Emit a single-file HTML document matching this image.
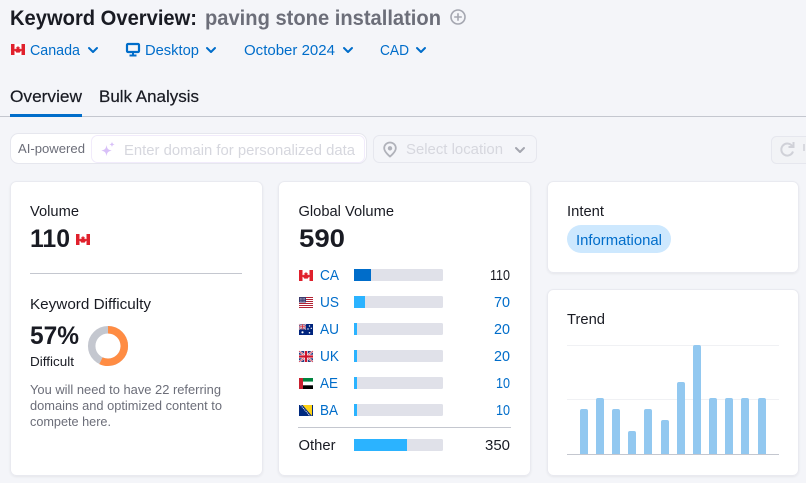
<!DOCTYPE html>
<html><head><meta charset="utf-8"><title>Keyword Overview</title>
<style>
html,body{margin:0;padding:0;background:#f4f5f9;width:806px;height:483px;overflow:hidden}
svg{display:block}
text{font-family:"Liberation Sans",sans-serif;font-size:14.8px;fill:#191b23}
.b{font-weight:700}
.blue{fill:#006dca}
.gr{fill:#6c6e79}
.ph{fill:#d6d7de}
.sm{font-size:12.7px}
.big{font-size:25.4px;font-weight:700}
.card{fill:#fff;stroke:#e9eaf0;stroke-width:1}
.chev{fill:none;stroke:#006dca;stroke-width:2;stroke-linecap:round;stroke-linejoin:round}
.track{fill:#e0e1e9}
.bar{fill:#92c8f0}
</style></head><body>
<svg width="806" height="483" viewBox="0 0 806 483" xmlns="http://www.w3.org/2000/svg">
<defs>
<symbol id="ca" viewBox="0 0 14 11"><rect width="14" height="11" fill="#fff"/><rect width="3.5" height="11" fill="#e0202c"/><rect x="10.5" width="3.5" height="11" fill="#e0202c"/><path d="M7 1.8l.8 1.5.9-.4-.3 2.2 1-.6.3.7 1.1-.2-.4 1.2.4.3-1.9 1.4.2.7-1.8-.2V9h-.6v-.6l-1.8.2.2-.7-1.9-1.4.4-.3-.4-1.2 1.1.2.3-.7 1 .6-.3-2.2.9.4z" fill="#e0202c"/></symbol>
<filter id="sh" x="-5%" y="-5%" width="110%" height="110%"><feDropShadow dx="0" dy="1" stdDeviation="1" flood-color="#191b23" flood-opacity=".06"/></filter>
</defs>

<rect width="806" height="483" fill="#f4f5f9"/>

<!-- Title -->
<text x="10" y="25" class="b" style="font-size:21px" textLength="187" lengthAdjust="spacingAndGlyphs">Keyword Overview:</text>
<text x="205" y="25" class="b" style="font-size:21px;fill:#6c6e79" textLength="236" lengthAdjust="spacingAndGlyphs">paving stone installation</text>
<circle cx="458" cy="17" r="7" fill="none" stroke="#a4a6b0" stroke-width="1.6"/>
<path d="M458 13.2v7.6M454.2 17h7.6" stroke="#a4a6b0" stroke-width="1.6"/>

<!-- Filters -->
<use href="#ca" x="11" y="44" width="14" height="11"/>
<text x="30" y="55" class="blue" textLength="50" lengthAdjust="spacingAndGlyphs">Canada</text>
<path d="M89 48l4 4 4-4" class="chev"/>
<rect x="127" y="44" width="12" height="8" rx="1" fill="none" stroke="#006dca" stroke-width="2.2"/>
<path d="M133 53v2.500M129.500 55.500h7" stroke="#006dca" stroke-width="2"/>
<text x="145" y="55" class="blue" textLength="54" lengthAdjust="spacingAndGlyphs">Desktop</text>
<path d="M207 48l4 4 4-4" class="chev"/>
<text x="244" y="55" class="blue" textLength="91" lengthAdjust="spacingAndGlyphs">October 2024</text>
<path d="M344 48l4 4 4-4" class="chev"/>
<text x="380" y="55" class="blue" textLength="29" lengthAdjust="spacingAndGlyphs">CAD</text>
<path d="M417 48l4 4 4-4" class="chev"/>

<!-- Tabs -->
<text x="10" y="102" style="font-size:16.9px;stroke:#191b23;stroke-width:.2" textLength="72" lengthAdjust="spacingAndGlyphs">Overview</text>
<text x="99" y="102" style="font-size:16.9px;stroke:#191b23;stroke-width:.2" textLength="100" lengthAdjust="spacingAndGlyphs">Bulk Analysis</text>
<rect x="0" y="116" width="806" height="1" fill="#c4c7cf"/>
<rect x="10" y="114" width="72" height="3" fill="#006dca"/>

<!-- AI row -->
<rect x="10.5" y="133.5" width="356" height="30" rx="8" fill="#fff" stroke="#e6e7ee"/>
<text x="18" y="153" class="sm gr" textLength="67" lengthAdjust="spacingAndGlyphs">AI-powered</text>
<rect x="91.5" y="135.5" width="273" height="27" rx="6" fill="#fff" stroke="#f1ebfb"/>
<path d="M106.500 145c.6 3.800 1.500 4.800 5.200 5.600-3.700.8-4.600 1.800-5.200 5.600-.6-3.800-1.500-4.800-5.200-5.600 3.700-.8 4.600-1.800 5.200-5.600z" fill="#d8c0f8"/>
<path d="M112 141.500c.3 2 .8 2.500 2.800 2.900-2 .4-2.500.9-2.800 2.900-.3-2-.8-2.500-2.800-2.900 2-.4 2.500-.9 2.800-2.900z" fill="#d8c0f8"/>
<text x="124" y="155" class="ph" textLength="231" lengthAdjust="spacingAndGlyphs">Enter domain for personalized data</text>

<rect x="373.500" y="135.500" width="163" height="27" rx="6" fill="#f4f5f9" stroke="#e6e7ee"/>
<path d="M390 142.500c-3.300 0-5.800 2.500-5.800 5.700 0 3.700 5.800 8.300 5.800 8.300s5.800-4.600 5.800-8.300c0-3.200-2.500-5.700-5.800-5.700z" fill="none" stroke="#b0b2ba" stroke-width="1.800"/>
<circle cx="390" cy="148.300" r="2.200" fill="#b0b2ba"/>
<text x="406" y="154" class="ph" textLength="97" lengthAdjust="spacingAndGlyphs">Select location</text>
<path d="M516 148l4 4 4-4" fill="none" stroke="#a4a6b0" stroke-width="2" stroke-linecap="round" stroke-linejoin="round"/>

<rect x="771.500" y="136.500" width="50" height="27" rx="5" fill="#f2f3f6" stroke="#e6e7ee"/>
<path d="M792.500 146.500a6 6 0 1 0 .5 5" fill="none" stroke="#d0d1d8" stroke-width="2"/>
<path d="M793.500 142v5h-5" fill="none" stroke="#d0d1d8" stroke-width="2"/>
<path d="M804 144v7" stroke="#d8d9df" stroke-width="2"/>

<!-- Card 1 -->
<rect x="10.500" y="181.500" width="252" height="294" rx="6" class="card" filter="url(#sh)"/>
<text x="30" y="216" textLength="49" lengthAdjust="spacingAndGlyphs">Volume</text>
<text x="30" y="247" class="big" textLength="40" lengthAdjust="spacingAndGlyphs">110</text>
<use href="#ca" x="76" y="234" width="14" height="11"/>
<rect x="30" y="273" width="212" height="1" fill="#c4c7cf"/>
<text x="30" y="309" textLength="121" lengthAdjust="spacingAndGlyphs">Keyword Difficulty</text>
<text x="30" y="344" class="big" textLength="49" lengthAdjust="spacingAndGlyphs">57%</text>
<text x="30" y="366" class="sm" textLength="44" lengthAdjust="spacingAndGlyphs">Difficult</text>
<circle cx="108" cy="346" r="16.300" fill="none" stroke="#c4c7cf" stroke-width="7.500"/>
<circle cx="108" cy="346" r="16.300" fill="none" stroke="#ff8c43" stroke-width="7.500" stroke-dasharray="58.400 102.400" transform="rotate(-90 108 346)"/>
<text x="30" y="394" class="sm gr" textLength="191" lengthAdjust="spacingAndGlyphs">You will need to have 22 referring</text>
<text x="30" y="410" class="sm gr" textLength="192" lengthAdjust="spacingAndGlyphs">domains and optimized content to</text>
<text x="30" y="426" class="sm gr" textLength="81" lengthAdjust="spacingAndGlyphs">compete here.</text>

<!-- Card 2 -->
<rect x="278.500" y="181.500" width="252" height="294" rx="6" class="card" filter="url(#sh)"/>
<text x="298.500" y="216" textLength="95.500" lengthAdjust="spacingAndGlyphs">Global Volume</text>
<text x="299" y="247" class="big" textLength="46" lengthAdjust="spacingAndGlyphs">590</text>

<!-- CA -->
<use href="#ca" x="299" y="270" width="14" height="11"/>
<text x="320" y="280" class="blue" textLength="19" lengthAdjust="spacingAndGlyphs">CA</text>
<rect x="354" y="269" width="89" height="12" rx="1.500" class="track"/>
<rect x="354" y="269" width="17" height="12" fill="#006dca"/>
<text x="490" y="280" textLength="20" lengthAdjust="spacingAndGlyphs">110</text>
<!-- US -->
<g transform="translate(299,297)"><rect width="14" height="11" fill="#fff"/><path d="M0 .5h14M0 2.500h14M0 4.500h14M0 6.500h14M0 8.500h14M0 10.500h14" stroke="#b22234" stroke-width="1"/><rect width="7" height="5.500" fill="#3c3b6e"/><path d="M1 1.300h5M1 2.800h5M1 4.200h5" stroke="#c8c8e0" stroke-width=".7" stroke-dasharray=".8 .6"/></g>
<text x="320" y="307" class="blue" textLength="19" lengthAdjust="spacingAndGlyphs">US</text>
<rect x="354" y="296" width="89" height="12" rx="1.500" class="track"/>
<rect x="354" y="296" width="11" height="12" fill="#2bb3ff"/>
<text x="494" y="307" class="blue" textLength="16" lengthAdjust="spacingAndGlyphs">70</text>
<!-- AU -->
<g transform="translate(299,324)"><rect width="14" height="11" fill="#00247d"/><rect width="7" height="5.500" fill="#5a5f97"/><path d="M0 0l7 5.500M7 0L0 5.500" stroke="#e8b0b8" stroke-width="1"/><path d="M3.500 0v5.500M0 2.750h7" stroke="#f4dfe2" stroke-width="1.500"/><path d="M3.500 0v5.500M0 2.750h7" stroke="#cf2a3a" stroke-width=".8"/><circle cx="3.500" cy="8.300" r="1.100" fill="#fff"/><circle cx="10.500" cy="2" r=".7" fill="#fff"/><circle cx="12.300" cy="4.300" r=".7" fill="#fff"/><circle cx="9" cy="5" r=".7" fill="#fff"/><circle cx="10.500" cy="8.800" r=".8" fill="#fff"/></g>
<text x="320" y="334" class="blue" textLength="19" lengthAdjust="spacingAndGlyphs">AU</text>
<rect x="354" y="323" width="89" height="12" rx="1.500" class="track"/>
<rect x="354" y="323" width="3" height="12" fill="#2bb3ff"/>
<text x="494" y="334" class="blue" textLength="16" lengthAdjust="spacingAndGlyphs">20</text>
<!-- UK -->
<g transform="translate(299,351)"><rect width="14" height="11" fill="#2a3d80"/><path d="M0 0l14 11M14 0L0 11" stroke="#fff" stroke-width="2"/><path d="M0 0l14 11M14 0L0 11" stroke="#cf142b" stroke-width=".7"/><path d="M7 0v11M0 5.500h14" stroke="#fff" stroke-width="3.600"/><path d="M7 0v11M0 5.500h14" stroke="#cf142b" stroke-width="2.200"/></g>
<text x="320" y="361" class="blue" textLength="19" lengthAdjust="spacingAndGlyphs">UK</text>
<rect x="354" y="350" width="89" height="12" rx="1.500" class="track"/>
<rect x="354" y="350" width="3" height="12" fill="#2bb3ff"/>
<text x="494" y="361" class="blue" textLength="16" lengthAdjust="spacingAndGlyphs">20</text>
<!-- AE -->
<g transform="translate(299,378)"><rect width="14" height="3.700" fill="#00853f"/><rect y="3.700" width="14" height="3.600" fill="#fff"/><rect y="7.300" width="14" height="3.700" fill="#000"/><rect width="4" height="11" fill="#c8202f"/></g>
<text x="320" y="388" class="blue" textLength="18" lengthAdjust="spacingAndGlyphs">AE</text>
<rect x="354" y="377" width="89" height="12" rx="1.500" class="track"/>
<rect x="354" y="377" width="3" height="12" fill="#2bb3ff"/>
<text x="496" y="388" class="blue" textLength="14" lengthAdjust="spacingAndGlyphs">10</text>
<!-- BA -->
<g transform="translate(299,405)"><rect width="14" height="11" fill="#002a7f"/><path d="M3.500 0H13V11z" fill="#fcd116"/><path d="M1.500 0L11 11" stroke="#e8e8f0" stroke-width="1" stroke-dasharray="1.200 .8"/></g>
<text x="320" y="415" class="blue" textLength="18" lengthAdjust="spacingAndGlyphs">BA</text>
<rect x="354" y="404" width="89" height="12" rx="1.500" class="track"/>
<rect x="354" y="404" width="3" height="12" fill="#2bb3ff"/>
<text x="496" y="415" class="blue" textLength="14" lengthAdjust="spacingAndGlyphs">10</text>

<rect x="298" y="427" width="213" height="1" fill="#c4c7cf"/>
<text x="298.500" y="450" textLength="37" lengthAdjust="spacingAndGlyphs">Other</text>
<rect x="354" y="439" width="89" height="12" rx="1.500" class="track"/>
<rect x="354" y="439" width="53" height="12" fill="#2bb3ff"/>
<text x="485" y="450" textLength="25" lengthAdjust="spacingAndGlyphs">350</text>

<!-- Intent -->
<rect x="547.500" y="181.500" width="251" height="91" rx="6" class="card" filter="url(#sh)"/>
<text x="567" y="216" textLength="37" lengthAdjust="spacingAndGlyphs">Intent</text>
<rect x="567" y="225" width="104" height="28" rx="14" fill="#cde8fe"/>
<text x="576" y="245" class="blue" textLength="86" lengthAdjust="spacingAndGlyphs">Informational</text>

<!-- Trend -->
<rect x="547.500" y="289.500" width="251" height="186" rx="6" class="card" filter="url(#sh)"/>
<text x="567" y="324" textLength="38" lengthAdjust="spacingAndGlyphs">Trend</text>
<rect x="567" y="345" width="212" height="1" fill="#f0f1f4"/>
<rect x="567" y="399" width="212" height="1" fill="#f0f1f4"/>
<path class="bar" d="M580 454v-43a2 2 0 0 1 2-2h4a2 2 0 0 1 2 2v43z"/>
<path class="bar" d="M596 454v-54a2 2 0 0 1 2-2h4a2 2 0 0 1 2 2v54z"/>
<path class="bar" d="M612 454v-43a2 2 0 0 1 2-2h4a2 2 0 0 1 2 2v43z"/>
<path class="bar" d="M628 454v-21a2 2 0 0 1 2-2h4a2 2 0 0 1 2 2v21z"/>
<path class="bar" d="M644 454v-43a2 2 0 0 1 2-2h4a2 2 0 0 1 2 2v43z"/>
<path class="bar" d="M661 454v-32a2 2 0 0 1 2-2h4a2 2 0 0 1 2 2v32z"/>
<path class="bar" d="M677 454v-70a2 2 0 0 1 2-2h4a2 2 0 0 1 2 2v70z"/>
<path class="bar" d="M693 454v-107a2 2 0 0 1 2-2h4a2 2 0 0 1 2 2v107z"/>
<path class="bar" d="M709 454v-54a2 2 0 0 1 2-2h4a2 2 0 0 1 2 2v54z"/>
<path class="bar" d="M725 454v-54a2 2 0 0 1 2-2h4a2 2 0 0 1 2 2v54z"/>
<path class="bar" d="M741 454v-54a2 2 0 0 1 2-2h4a2 2 0 0 1 2 2v54z"/>
<path class="bar" d="M758 454v-54a2 2 0 0 1 2-2h4a2 2 0 0 1 2 2v54z"/>
<rect x="567" y="454" width="212" height="1" fill="#c4c7cf"/>
</svg>
</body></html>
